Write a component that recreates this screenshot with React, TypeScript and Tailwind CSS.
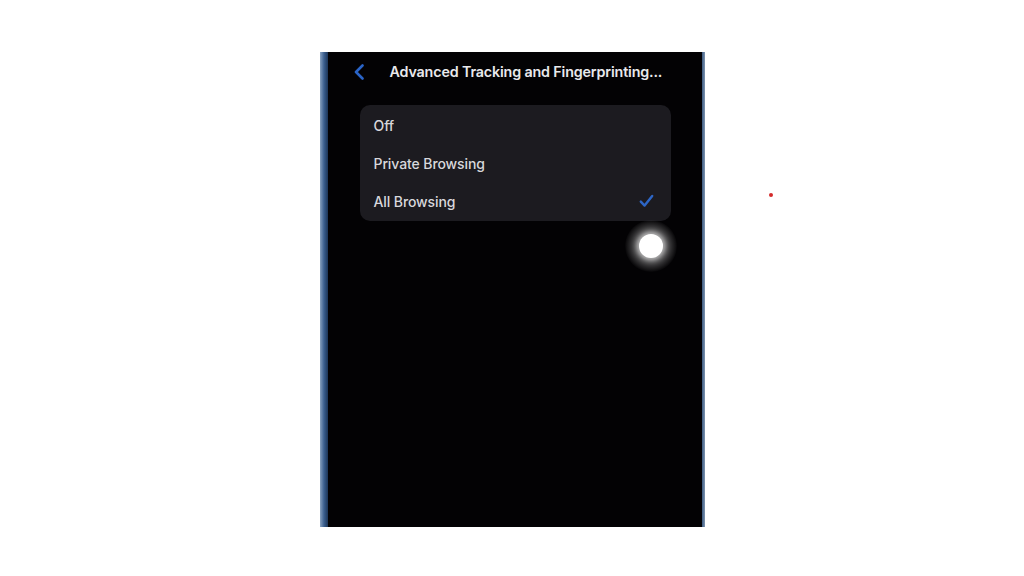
import React from 'react';

const options = [
  { label: 'Off', selected: false },
  { label: 'Private Browsing', selected: false },
  { label: 'All Browsing', selected: true },
];

function Chevron() {
  return (
    <svg width="12" height="16" viewBox="0 0 12 16" fill="none">
      <path
        d="M9.5 1.5 L3 8 L9.5 14.5"
        stroke="#2a64c8"
        strokeWidth="2.6"
        strokeLinecap="round"
        strokeLinejoin="round"
      />
    </svg>
  );
}

function Check() {
  return (
    <svg width="15" height="14" viewBox="0 0 15 14" fill="none">
      <path
        d="M1.8 7.6 L5.6 11.6 L13.2 2"
        stroke="#2d66c6"
        strokeWidth="2.4"
        strokeLinecap="round"
        strokeLinejoin="round"
      />
    </svg>
  );
}

function App() {
  return (
    <div
      className="relative w-[1024px] h-[576px] bg-white flex items-center justify-center overflow-hidden"
      style={{ fontFamily: 'Inter, "Noto Sans", sans-serif' }}
    >
      <div className="flex h-[475px] w-[385px] mt-[3px]">
        <div className="w-[8px] bg-gradient-to-r from-[#8aa2bf] via-[#3b5f8f] to-[#1c3558]" />
        <div className="flex-1 bg-[#030204] flex flex-col">
          <div className="flex items-center h-[38px] mt-[1px] pl-[25px]">
            <Chevron />
            <span className="ml-[25px] text-[14.3px] font-semibold text-[#e9e9ec] tracking-[-0.15px]">
              Advanced Tracking and Fingerprinting...
            </span>
          </div>
          <div className="mt-[14px] ml-[32px] mr-[31px] rounded-[10px] bg-[#1c1b20] py-[1px]">
            {options.map((o) => (
              <div key={o.label} className="flex items-center justify-between h-[38px] pl-[14px] pr-[17px]">
                <span className="text-[14px] font-medium text-[#d8d8dc] tracking-[-0.1px]">{o.label}</span>
                {o.selected ? <Check /> : null}
              </div>
            ))}
          </div>
        </div>
        <div className="w-[3px] bg-gradient-to-r from-[#3b5a80] to-[#7f95b0]" />
      </div>

      {/* touch indicator */}
      <div className="absolute left-[625px] top-[220px] w-[52px] h-[52px] rounded-full bg-[radial-gradient(circle,_rgba(255,255,255,0.4)_36%,_rgba(255,255,255,0.14)_58%,_rgba(255,255,255,0)_72%)] flex items-center justify-center">
        <div className="w-[24px] h-[24px] rounded-full bg-white shadow-[0_0_5px_2px_rgba(255,255,255,0.55)]" />
      </div>

      <div className="absolute left-[769px] top-[193px] w-[4px] h-[4px] rounded-full bg-[#d42a2a]" />
    </div>
  );
}

export default App;
